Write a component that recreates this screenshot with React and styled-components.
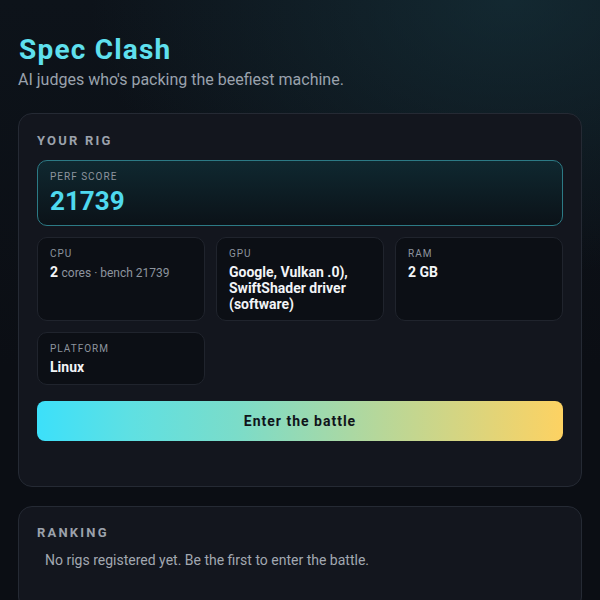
import React from 'react'
import styled, { createGlobalStyle } from 'styled-components'

const GlobalStyle = createGlobalStyle`
    html, body {
        margin: 0;
        padding: 0;
        background: #0b0e14;
    }
    body {
        font-family: Roboto, "Noto Sans", "Liberation Sans", sans-serif;
        color: #e6e9ee;
    }
`

const Page = styled.div`
    min-height: 600px;
    padding: 32px 18px 0;
    box-sizing: border-box;
    background:
        radial-gradient(ellipse 70% 45% at 85% 0%, rgba(24, 58, 68, 0.55), rgba(24, 58, 68, 0) 100%),
        linear-gradient(180deg, #0d131a 0%, #0b0e14 60%);
`

const Title = styled.h1`
    margin: 0 0 0 1px;
    font-size: 28px;
    line-height: 36px;
    font-weight: 700;
    letter-spacing: 1.2px;
    color: #5fe0ee;
`

const Subtitle = styled.p`
    margin: 1px 0 0 0;
    font-size: 16px;
    line-height: 22px;
    color: #9aa2ad;
`

const Card = styled.section`
    margin-top: ${p => p.$top}px;
    background: #13161e;
    border: 1px solid #252a34;
    border-radius: 14px;
    padding: ${p => p.$pt}px 18px ${p => p.$bottom}px;
`

const SectionLabel = styled.h2`
    margin: 0;
    font-size: 13px;
    line-height: 18px;
    font-weight: 700;
    letter-spacing: 2.2px;
    color: #9ca2ac;
    text-transform: uppercase;
`

const ScoreBox = styled.div`
    margin-top: 10px;
    border: 1px solid #2c7a85;
    border-radius: 10px;
    padding: 9px 12px 9px;
    background: linear-gradient(180deg, #0f2830 0%, #0b1218 100%);
`

const TinyLabel = styled.div`
    font-size: 10px;
    line-height: 14px;
    letter-spacing: 1px;
    color: #8d949e;
    text-transform: uppercase;
`

const Score = styled.div`
    margin-top: 2px;
    font-size: 26px;
    line-height: 30px;
    font-weight: 700;
    color: #4fd9ef;
`

const Grid = styled.div`
    margin-top: 11px;
    display: grid;
    grid-template-columns: repeat(3, 1fr);
    gap: 11px;
`

const Cell = styled.div`
    background: #0c0f15;
    border: 1px solid #20242d;
    border-radius: 10px;
    padding: 9px 12px 0;
    min-height: ${p => p.$h}px;
    box-sizing: border-box;
`

const Value = styled.div`
    margin-top: 3px;
    font-size: 14px;
    line-height: 16px;
    font-weight: 700;
    color: #f2f4f7;
`

const Muted = styled.span`
    font-size: 12px;
    font-weight: 400;
    color: #8d949e;
`

const BattleButton = styled.button`
    display: block;
    width: 100%;
    margin-top: 16px;
    height: 40px;
    border: none;
    border-radius: 8px;
    background: linear-gradient(90deg, #3ce0fa 0%, #5fe0e2 18%, #7bdcc9 38%, #b6d79a 65%, #fdd262 100%);
    font-family: inherit;
    font-size: 14px;
    font-weight: 700;
    letter-spacing: 1px;
    color: #10141a;
    cursor: pointer;
`

const EmptyText = styled.p`
    margin: 8px 0 0 8px;
    font-size: 14px;
    line-height: 20px;
    color: #a2a8b1;
`

export default function App() {
    return (
        <>
            <GlobalStyle />
            <Page>
                <Title>Spec Clash</Title>
                <Subtitle>AI judges who's packing the beefiest machine.</Subtitle>

                <Card $top={22} $pt={18} $bottom={45}>
                    <SectionLabel>Your rig</SectionLabel>
                    <ScoreBox>
                        <TinyLabel>Perf score</TinyLabel>
                        <Score>21739</Score>
                    </ScoreBox>
                    <Grid>
                        <Cell $h={84}>
                            <TinyLabel>CPU</TinyLabel>
                            <Value>2 <Muted>cores · bench 21739</Muted></Value>
                        </Cell>
                        <Cell $h={84}>
                            <TinyLabel>GPU</TinyLabel>
                            <Value>Google, Vulkan .0), SwiftShader driver (software)</Value>
                        </Cell>
                        <Cell $h={84}>
                            <TinyLabel>RAM</TinyLabel>
                            <Value>2 GB</Value>
                        </Cell>
                        <Cell $h={53}>
                            <TinyLabel>Platform</TinyLabel>
                            <Value>Linux</Value>
                        </Cell>
                    </Grid>
                    <BattleButton>Enter the battle</BattleButton>
                </Card>

                <Card $top={19} $pt={17} $bottom={40}>
                    <SectionLabel>Ranking</SectionLabel>
                    <EmptyText>No rigs registered yet. Be the first to enter the battle.</EmptyText>
                </Card>
            </Page>
        </>
    )
}
